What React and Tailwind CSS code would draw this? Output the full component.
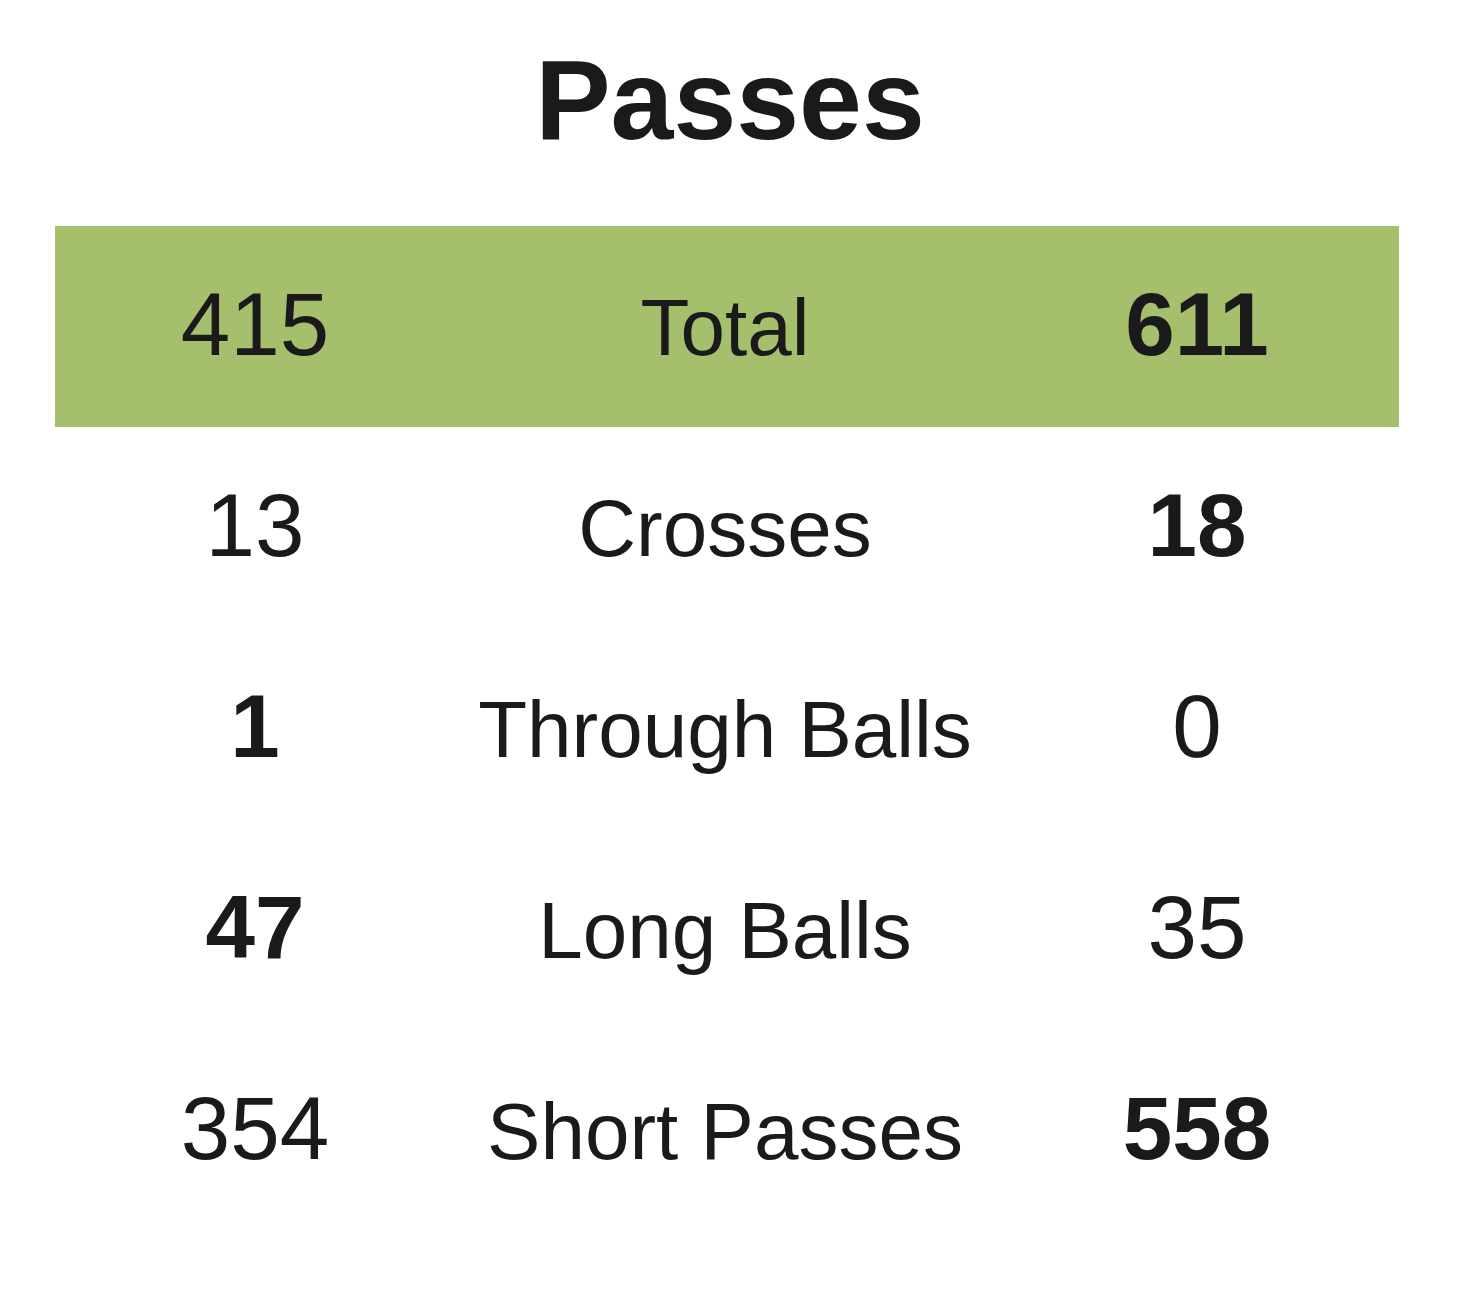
import React from 'react';

const rows = [
  { left: '415', label: 'Total', right: '611', bold: 'right', highlight: true },
  { left: '13', label: 'Crosses', right: '18', bold: 'right' },
  { left: '1', label: 'Through Balls', right: '0', bold: 'left' },
  { left: '47', label: 'Long Balls', right: '35', bold: 'left' },
  { left: '354', label: 'Short Passes', right: '558', bold: 'right' },
];

const StatRow = ({ row }) => (
  <div
    className={`flex h-[201px] items-center pb-[4px] ${row.highlight ? 'bg-[#a5bf6d]' : ''}`}
  >
    <div className="flex w-full items-baseline">
      <div className={`w-[400px] text-center text-[89px] ${row.bold === 'left' ? 'font-bold' : ''}`}>
        {row.left}
      </div>
      <div className="w-[540px] text-center text-[80px]">{row.label}</div>
      <div className={`w-[404px] text-center text-[89px] ${row.bold === 'right' ? 'font-bold' : ''}`}>
        {row.right}
      </div>
    </div>
  </div>
);

const App = () => {
  return (
    <div className="w-[1460px] h-[1293px] bg-white text-[#1a1a1a] font-['Liberation_Sans',Arial,sans-serif]">
      <h1 className="h-[226px] pt-[44px] text-center text-[113px] font-bold leading-none">
        Passes
      </h1>
      <div className="ml-[55px] w-[1344px] leading-none">
        {rows.map((row, i) => (
          <StatRow key={i} row={row} />
        ))}
      </div>
    </div>
  );
};

export default App;
